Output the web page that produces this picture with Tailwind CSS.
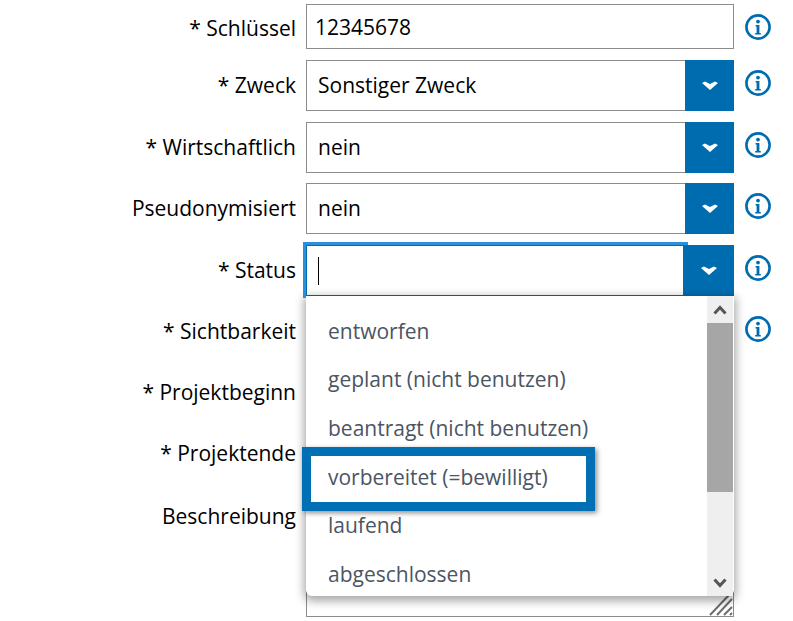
<!DOCTYPE html>
<html lang="de">
<head>
    <meta charset="UTF-8">
    <title>Projekt</title>
    <script src="https://cdn.jsdelivr.net/npm/@tailwindcss/browser@4"></script>
</head>
<body class="bg-white overflow-hidden h-[621px] font-['Open_Sans',sans-serif] text-[21px] text-black">
<div class="relative w-[793px] h-[621px]">

    <form class="flex flex-col pt-[4px]">
        <!-- Schluessel -->
        <div class="flex items-center h-[45px]">
            <label class="w-[296px] text-right pt-[4px]">* Schlüssel</label>
            <div class="ml-[10px] w-[428px] h-[45px] border border-[#8c8c8c] pl-[8px] pt-[2px] flex items-center">12345678</div>
            <svg class="ml-[11px]" width="26" height="26" viewBox="0 0 26 26"><circle cx="13" cy="13" r="11.6" fill="none" stroke="#006cb0" stroke-width="2.6"/><circle cx="13" cy="7.6" r="1.9" fill="#006cb0"/><path d="M10.6 11h3.8v8h1.4v1.6h-5.6V19h1.4v-6.4h-1z" fill="#006cb0"/></svg>
        </div>
        <!-- Zweck -->
        <div class="flex items-center h-[51px] mt-[11px]">
            <label class="w-[296px] text-right">* Zweck</label>
            <div class="ml-[10px] w-[428px] h-[51px] flex">
                <div class="flex-1 border border-r-0 border-[#8c8c8c] pl-[11px] flex items-center">Sonstiger Zweck</div>
                <div class="w-[49px] bg-[#006cb0] flex items-center justify-center"><svg width="16" height="9" viewBox="0 0 16 9"><path d="M0 2 3 .4 8 3l5-2.6L16 2 8 9z" fill="#fff"/></svg></div>
            </div>
            <svg class="ml-[11px] -mt-[5px]" width="26" height="26" viewBox="0 0 26 26"><circle cx="13" cy="13" r="11.6" fill="none" stroke="#006cb0" stroke-width="2.6"/><circle cx="13" cy="7.6" r="1.9" fill="#006cb0"/><path d="M10.6 11h3.8v8h1.4v1.6h-5.6V19h1.4v-6.4h-1z" fill="#006cb0"/></svg>
        </div>
        <!-- Wirtschaftlich -->
        <div class="flex items-center h-[51px] mt-[11px]">
            <label class="w-[296px] text-right">* Wirtschaftlich</label>
            <div class="ml-[10px] w-[428px] h-[51px] flex">
                <div class="flex-1 border border-r-0 border-[#8c8c8c] pl-[11px] flex items-center">nein</div>
                <div class="w-[49px] bg-[#006cb0] flex items-center justify-center"><svg width="16" height="9" viewBox="0 0 16 9"><path d="M0 2 3 .4 8 3l5-2.6L16 2 8 9z" fill="#fff"/></svg></div>
            </div>
            <svg class="ml-[11px] -mt-[5px]" width="26" height="26" viewBox="0 0 26 26"><circle cx="13" cy="13" r="11.6" fill="none" stroke="#006cb0" stroke-width="2.6"/><circle cx="13" cy="7.6" r="1.9" fill="#006cb0"/><path d="M10.6 11h3.8v8h1.4v1.6h-5.6V19h1.4v-6.4h-1z" fill="#006cb0"/></svg>
        </div>
        <!-- Pseudonymisiert -->
        <div class="flex items-center h-[51px] mt-[10px]">
            <label class="w-[296px] text-right">Pseudonymisiert</label>
            <div class="ml-[10px] w-[428px] h-[51px] flex">
                <div class="flex-1 border border-r-0 border-[#8c8c8c] pl-[11px] flex items-center">nein</div>
                <div class="w-[49px] bg-[#006cb0] flex items-center justify-center"><svg width="16" height="9" viewBox="0 0 16 9"><path d="M0 2 3 .4 8 3l5-2.6L16 2 8 9z" fill="#fff"/></svg></div>
            </div>
            <svg class="ml-[11px] -mt-[5px]" width="26" height="26" viewBox="0 0 26 26"><circle cx="13" cy="13" r="11.6" fill="none" stroke="#006cb0" stroke-width="2.6"/><circle cx="13" cy="7.6" r="1.9" fill="#006cb0"/><path d="M10.6 11h3.8v8h1.4v1.6h-5.6V19h1.4v-6.4h-1z" fill="#006cb0"/></svg>
        </div>
        <!-- Status -->
        <div class="flex items-center h-[51px] mt-[11px]">
            <label class="w-[296px] text-right">* Status</label>
            <div class="relative ml-[10px] w-[428px] h-[51px] flex">
                <div class="flex-1 border border-[#006cb0] pl-[11px] flex items-center"><span class="w-[1px] h-[28px] bg-black"></span></div>
                <div class="w-[50px] bg-[#006cb0] flex items-center justify-center"><svg width="16" height="9" viewBox="0 0 16 9"><path d="M0 2 3 .4 8 3l5-2.6L16 2 8 9z" fill="#fff"/></svg></div>
                <!-- focus ring -->
                <span class="absolute left-[-3px] top-[-3px] w-[385px] h-[3px] bg-[#2a90dc]"></span>
                <span class="absolute z-10 left-[-3px] top-[-3px] w-[3px] h-[56px] bg-[#2a90dc]"></span>
            </div>
            <svg class="ml-[11px] -mt-[5px]" width="26" height="26" viewBox="0 0 26 26"><circle cx="13" cy="13" r="11.6" fill="none" stroke="#006cb0" stroke-width="2.6"/><circle cx="13" cy="7.6" r="1.9" fill="#006cb0"/><path d="M10.6 11h3.8v8h1.4v1.6h-5.6V19h1.4v-6.4h-1z" fill="#006cb0"/></svg>
        </div>
        <!-- Sichtbarkeit -->
        <div class="flex items-center h-[51px] mt-[10px]">
            <label class="w-[296px] text-right">* Sichtbarkeit</label>
            <div class="ml-[10px] w-[428px] h-[51px]"></div>
            <svg class="ml-[11px] -mt-[5px]" width="26" height="26" viewBox="0 0 26 26"><circle cx="13" cy="13" r="11.6" fill="none" stroke="#006cb0" stroke-width="2.6"/><circle cx="13" cy="7.6" r="1.9" fill="#006cb0"/><path d="M10.6 11h3.8v8h1.4v1.6h-5.6V19h1.4v-6.4h-1z" fill="#006cb0"/></svg>
        </div>
        <div class="flex items-center h-[51px] mt-[11px]">
            <label class="w-[296px] text-right -mt-[1px]">* Projektbeginn</label>
        </div>
        <div class="flex items-center h-[51px] mt-[10px]">
            <label class="w-[296px] text-right -mt-[1px]">* Projektende</label>
        </div>
        <!-- Beschreibung -->
        <div class="flex items-start mt-[11px]">
            <label class="w-[296px] text-right pt-[10px]">Beschreibung</label>
            <div class="relative ml-[10px] w-[428px] h-[126px] border border-[#8c8c8c]">
                <svg class="absolute right-0 bottom-0" width="24" height="22" viewBox="0 0 24 22"><path d="M1 21 20 1M8 21 23 5M15 21l8-8M21 21l2-2" stroke="#6e6e6e" stroke-width="2" fill="none"/></svg>
            </div>
        </div>
    </form>

    <!-- Dropdown list of the status field -->
    <div class="absolute left-[306px] top-[296px] w-[428px] h-[300px] bg-white rounded-b-[6px] shadow-[0_3px_10px_2px_rgba(0,0,0,0.35)] flex">
        <ul class="flex-1 pt-[10.8px] pl-[22px] text-[#4b5563]">
            <li class="h-[48.6px] leading-[48px]">entworfen</li>
            <li class="h-[48.6px] leading-[48px]">geplant (nicht benutzen)</li>
            <li class="h-[48.6px] leading-[48px]">beantragt (nicht benutzen)</li>
            <li class="h-[48.6px] leading-[48px]">vorbereitet (=bewilligt)</li>
            <li class="h-[48.6px] leading-[48px]">laufend</li>
            <li class="h-[48.6px] leading-[48px]">abgeschlossen</li>
        </ul>
        <div class="w-[26px] mr-[1px] h-[300px] bg-[#efefef] flex flex-col">
            <div class="h-[27px] flex items-center justify-center"><svg width="14" height="10" viewBox="0 0 14 10"><path d="M1.5 8.5 7 2.5l5.5 6" fill="none" stroke="#555" stroke-width="3"/></svg></div>
            <div class="h-[169px] bg-[#a6a6a6]"></div>
            <div class="mt-auto h-[27px] flex items-center justify-center"><svg width="14" height="10" viewBox="0 0 14 10"><path d="M1.5 1.5 7 7.5l5.5-6" fill="none" stroke="#555" stroke-width="3"/></svg></div>
        </div>
    </div>

    <!-- Highlight frame over one option -->
    <div class="absolute left-[302px] top-[447px] w-[293px] h-[64px] border-[9px] border-[#006fb3] shadow-[2px_2px_5px_rgba(0,0,0,0.45)]"></div>
</div>
</body>
</html>
